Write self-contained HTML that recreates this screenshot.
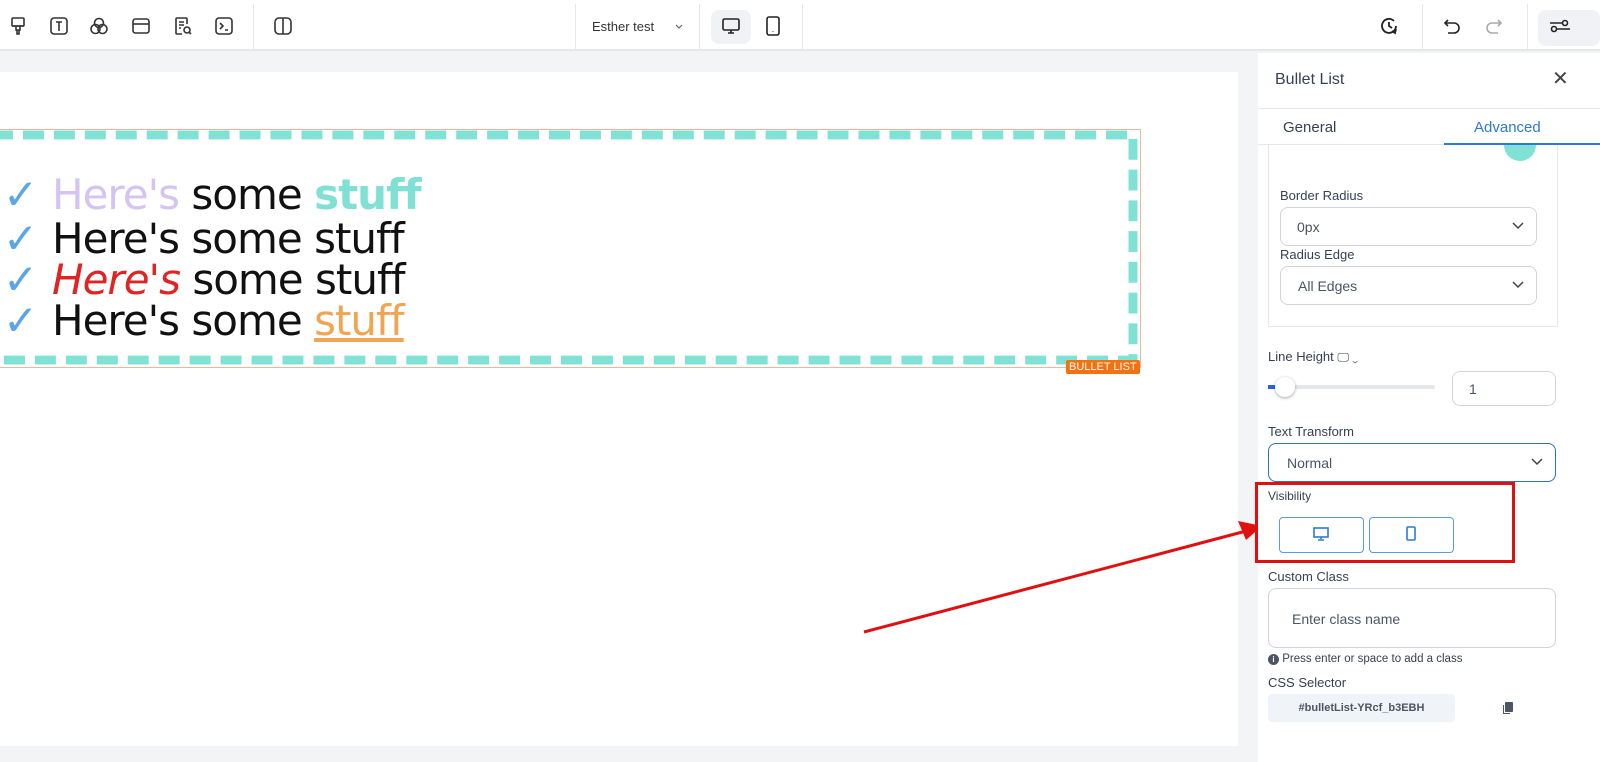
<!DOCTYPE html>
<html><head><meta charset="utf-8"><style>
*{box-sizing:border-box;margin:0;padding:0}
body{width:1600px;height:762px;overflow:hidden;background:#f3f4f6;font-family:"Liberation Sans",sans-serif;position:relative}
.top{position:absolute;left:0;top:0;width:1600px;height:51px;background:#fff;border-bottom:2px solid #e5e7eb}
.ic{position:absolute;top:16px}
.vl{position:absolute;top:4px;width:1px;height:46px;background:#e5e7eb}
.page{position:absolute;left:0;top:72px;width:1238px;height:674px;background:#fff}
.box{position:absolute;left:-14px;top:129px;width:1155px;height:239px;border:1px solid #f2b49c}
.dash{position:absolute;left:0;top:0;width:100%;height:100%}
.line{position:absolute;left:10px;font-size:42px;white-space:nowrap;color:#111;font-family:"DejaVu Sans","Liberation Sans",sans-serif;letter-spacing:-1px}
.chk{color:#5aa6e8;display:inline-block;width:55px;padding-left:6px;font-weight:300}
.panel{position:absolute;left:1258px;top:53px;width:342px;height:709px;background:#fff}
.lbl{position:absolute;font-size:13px;color:#374151}
.sel{position:absolute;border:1px solid #d1d5db;border-radius:8px;background:#fff;font-size:14px;color:#4b5563}
.chev{position:absolute;right:12px;top:50%;margin-top:-5px}
</style></head><body>
<div class="top">
<svg class="ic" style="left:8px" width="20" height="20" viewBox="0 0 20 20" fill="none" stroke="#333" stroke-width="1.6"><rect x="4" y="2" width="12" height="8" rx="1"/><path d="M4 10h12M8 10v4h4v-4M9 14v4h2v-4"/></svg>
<svg class="ic" style="left:49px" width="20" height="20" viewBox="0 0 20 20" fill="none" stroke="#333" stroke-width="1.6"><rect x="2" y="2" width="16" height="16" rx="3"/><path d="M7 6h6M10 6v9"/></svg>
<svg class="ic" style="left:89px" width="20" height="20" viewBox="0 0 20 20" fill="none" stroke="#333" stroke-width="1.6"><circle cx="10" cy="7" r="4.5"/><circle cx="6.5" cy="13" r="4.5"/><circle cx="13.5" cy="13" r="4.5"/></svg>
<svg class="ic" style="left:131px" width="20" height="20" viewBox="0 0 20 20" fill="none" stroke="#333" stroke-width="1.6"><rect x="2" y="3" width="16" height="14" rx="2.5"/><path d="M2 8h16"/></svg>
<svg class="ic" style="left:173px" width="20" height="20" viewBox="0 0 20 20" fill="none" stroke="#333" stroke-width="1.6"><path d="M14 8V3a1 1 0 0 0-1-1H4a1 1 0 0 0-1 1v14a1 1 0 0 0 1 1h5M6 6h5M6 9h5M6 12h2"/><circle cx="14" cy="14" r="3"/><path d="M16 16l2 2"/></svg>
<svg class="ic" style="left:214px" width="20" height="20" viewBox="0 0 20 20" fill="none" stroke="#333" stroke-width="1.6"><rect x="2" y="2" width="16" height="16" rx="3"/><path d="M6 7l3 3-3 3M11 14h3"/></svg>
<div class="vl" style="left:253px"></div>
<svg class="ic" style="left:273px" width="20" height="20" viewBox="0 0 20 20" fill="none" stroke="#333" stroke-width="1.6"><rect x="2" y="2" width="16" height="16" rx="4"/><path d="M10 2v16"/></svg>
<div class="vl" style="left:575px"></div>
<div style="position:absolute;left:592px;top:19px;font-size:13px;color:#333">Esther test</div>
<svg style="position:absolute;left:675px;top:24px" width="8" height="5" viewBox="0 0 8 5" fill="none" stroke="#666" stroke-width="1.2"><path d="M1 1l3 3 3-3"/></svg>
<div class="vl" style="left:699px"></div>
<div style="position:absolute;left:711px;top:10px;width:40px;height:34px;background:#f0f2f5;border-radius:8px"></div>
<svg class="ic" style="left:721px" width="20" height="20" viewBox="0 0 20 20" fill="none" stroke="#222" stroke-width="1.6"><rect x="2" y="3" width="16" height="11" rx="1.5"/><path d="M10 14v3M7 17h6"/></svg>
<svg class="ic" style="left:763px" width="20" height="20" viewBox="0 0 20 20" fill="none" stroke="#222" stroke-width="1.6"><rect x="4" y="1" width="12" height="18" rx="2"/><path d="M10 15v.5"/></svg>
<div class="vl" style="left:802px"></div>
<svg class="ic" style="left:1379px" width="20" height="20" viewBox="0 0 20 20" fill="none" stroke="#222" stroke-width="1.8"><path d="M17 10a7 7 0 1 1-2-5"/><path d="M10 6v4l3 2M17 13l-1 4-3-2"/></svg>
<div class="vl" style="left:1422px"></div>
<svg class="ic" style="left:1442px" width="20" height="20" viewBox="0 0 20 20" fill="none" stroke="#222" stroke-width="1.6"><path d="M6 4L3 7l3 3M3 7h9a5 5 0 0 1 0 10H6"/></svg>
<svg class="ic" style="left:1484px" width="20" height="20" viewBox="0 0 20 20" fill="none" stroke="#aaa" stroke-width="1.6"><path d="M14 4l3 3-3 3M17 7H8a5 5 0 0 0 0 10h6"/></svg>
<div class="vl" style="left:1527px"></div>
<div style="position:absolute;left:1538px;top:10px;width:62px;height:36px;background:#f0f2f5;border-radius:8px"></div>
<svg class="ic" style="left:1550px" width="20" height="20" viewBox="0 0 20 20" fill="none" stroke="#222" stroke-width="1.6"><circle cx="4" cy="13" r="2.5"/><path d="M7 13h13M0 7h12"/><circle cx="15" cy="7" r="2.5"/></svg>
</div>
<div class="page"></div>
<div class="box">
<svg class="dash" viewBox="0 0 1155 239" preserveAspectRatio="none"><rect x="5" y="5" width="1143" height="227" fill="none" stroke="#80e2d5" stroke-width="9" stroke-dasharray="21 10"/></svg>
<div class="line" style="top:40px"><span class="chk">✓</span><span style="color:#d5c3f2">Here's</span> some <b style="color:#7fe0d3">stuff</b></div>
<div class="line" style="top:84px"><span class="chk">✓</span>Here's some stuff</div>
<div class="line" style="top:125px"><span class="chk">✓</span><i style="color:#e02424">Here's</i> some stuff</div>
<div class="line" style="top:166px"><span class="chk">✓</span>Here's some <u style="color:#f0a552">stuff</u></div>
</div>
<div style="position:absolute;left:1066px;top:360px;background:#f5700f;color:#fff;font-size:11px;padding:1px 3px;border-radius:2px">BULLET LIST</div>
<svg style="position:absolute;left:0;top:0" width="1600" height="762"><path d="M864 632L1250 530" stroke="#e01010" stroke-width="3"/><path d="M1262 526L1238 521L1246 540Z" fill="#e01010"/></svg>
<div class="panel">
<div style="position:absolute;left:17px;top:18px;font-size:16px;color:#374151">Bullet List</div>
<div style="position:absolute;left:294px;top:13px;font-size:20px;color:#444">✕</div>
<div style="position:absolute;left:0;top:55px;width:342px;height:1px;background:#e5e7eb"></div>
<div style="position:absolute;left:25px;top:66px;font-size:15px;color:#374151">General</div>
<div style="position:absolute;left:216px;top:66px;font-size:15px;color:#2b7ad8">Advanced</div>
<div style="position:absolute;left:0;top:91px;width:342px;height:1px;background:#e5e7eb"></div>
<div style="position:absolute;left:186px;top:90px;width:156px;height:2px;background:#2b7ad8"></div>
<div style="position:absolute;left:10px;top:92px;width:290px;height:182px;border:1px solid #e5e7eb;border-top:none"></div>
<div style="position:absolute;left:246px;top:92px;width:32px;height:16px;background:#80e2d5;border-radius:0 0 16px 16px"></div>
<div class="lbl" style="left:22px;top:135px">Border Radius</div>
<div class="sel" style="left:22px;top:154px;width:257px;height:39px;padding:11px 16px">0px<svg class="chev" width="12" height="8" viewBox="0 0 12 8" fill="none" stroke="#444" stroke-width="1.5"><path d="M1 1l5 5 5-5"/></svg></div>
<div class="lbl" style="left:22px;top:194px">Radius Edge</div>
<div class="sel" style="left:22px;top:213px;width:257px;height:39px;padding:11px 17px">All Edges<svg class="chev" width="12" height="8" viewBox="0 0 12 8" fill="none" stroke="#444" stroke-width="1.5"><path d="M1 1l5 5 5-5"/></svg></div>
<div class="lbl" style="left:10px;top:296px">Line Height <span style="font-size:12px">🖵 ⌄</span></div>
<div style="position:absolute;left:10px;top:332px;width:167px;height:4px;background:#e5e7eb;border-radius:2px"></div>
<div style="position:absolute;left:10px;top:332px;width:10px;height:4px;background:#2563eb"></div>
<div style="position:absolute;left:17px;top:324px;width:20px;height:20px;border-radius:50%;background:#fff;box-shadow:0 1px 3px rgba(0,0,0,.35)"></div>
<div class="sel" style="left:194px;top:318px;width:104px;height:35px;padding:9px 16px">1</div>
<div class="lbl" style="left:10px;top:371px">Text Transform</div>
<div class="sel" style="left:10px;top:390px;width:288px;height:39px;padding:11px 18px;border:1.5px solid #2b6fd0">Normal<svg class="chev" width="12" height="8" viewBox="0 0 12 8" fill="none" stroke="#444" stroke-width="1.5"><path d="M1 1l5 5 5-5"/></svg></div>
<div style="position:absolute;left:-3px;top:429px;width:260px;height:81px;border:3px solid #e01010"></div>
<div class="lbl" style="left:10px;top:436px;font-size:12px">Visibility</div>
<div style="position:absolute;left:21px;top:464px;width:85px;height:36px;border:1px solid #5a9be0;border-radius:4px"></div>
<svg style="position:absolute;left:55px;top:474px" width="16" height="14" viewBox="0 0 16 14" fill="none" stroke="#2b7ad8" stroke-width="1.6"><rect x="1" y="1" width="14" height="9"/><path d="M8 10v2M5 13h6"/></svg>
<div style="position:absolute;left:111px;top:464px;width:85px;height:36px;border:1px solid #5a9be0;border-radius:4px"></div>
<svg style="position:absolute;left:148px;top:473px" width="10" height="15" viewBox="0 0 10 15" fill="none" stroke="#2b7ad8" stroke-width="1.6"><rect x="1" y="1" width="8" height="13" rx="1"/></svg>
<div class="lbl" style="left:10px;top:516px">Custom Class</div>
<div class="sel" style="left:10px;top:535px;width:288px;height:60px;padding:22px 23px">Enter class name</div>
<div style="position:absolute;left:10px;top:600px;font-size:11.5px;color:#374151"><span style="display:inline-block;width:11px;height:11px;border-radius:50%;background:#4b5563;color:#fff;font-size:8px;text-align:center;line-height:11px;font-weight:bold">i</span> Press enter or space to add a class</div>
<div class="lbl" style="left:10px;top:622px">CSS Selector</div>
<div style="position:absolute;left:10px;top:641px;width:187px;height:28px;background:#f0f3f7;border-radius:4px;font-size:11px;font-weight:bold;color:#4b5563;text-align:center;line-height:28px">#bulletList-YRcf_b3EBH</div>
<svg style="position:absolute;left:244px;top:649px" width="12" height="13" viewBox="0 0 12 13" fill="#4b5563"><rect x="3" y="0" width="8" height="10" rx="1"/><path d="M1 3v9h7v-1H2V3z"/></svg>
</div>
</body></html>
